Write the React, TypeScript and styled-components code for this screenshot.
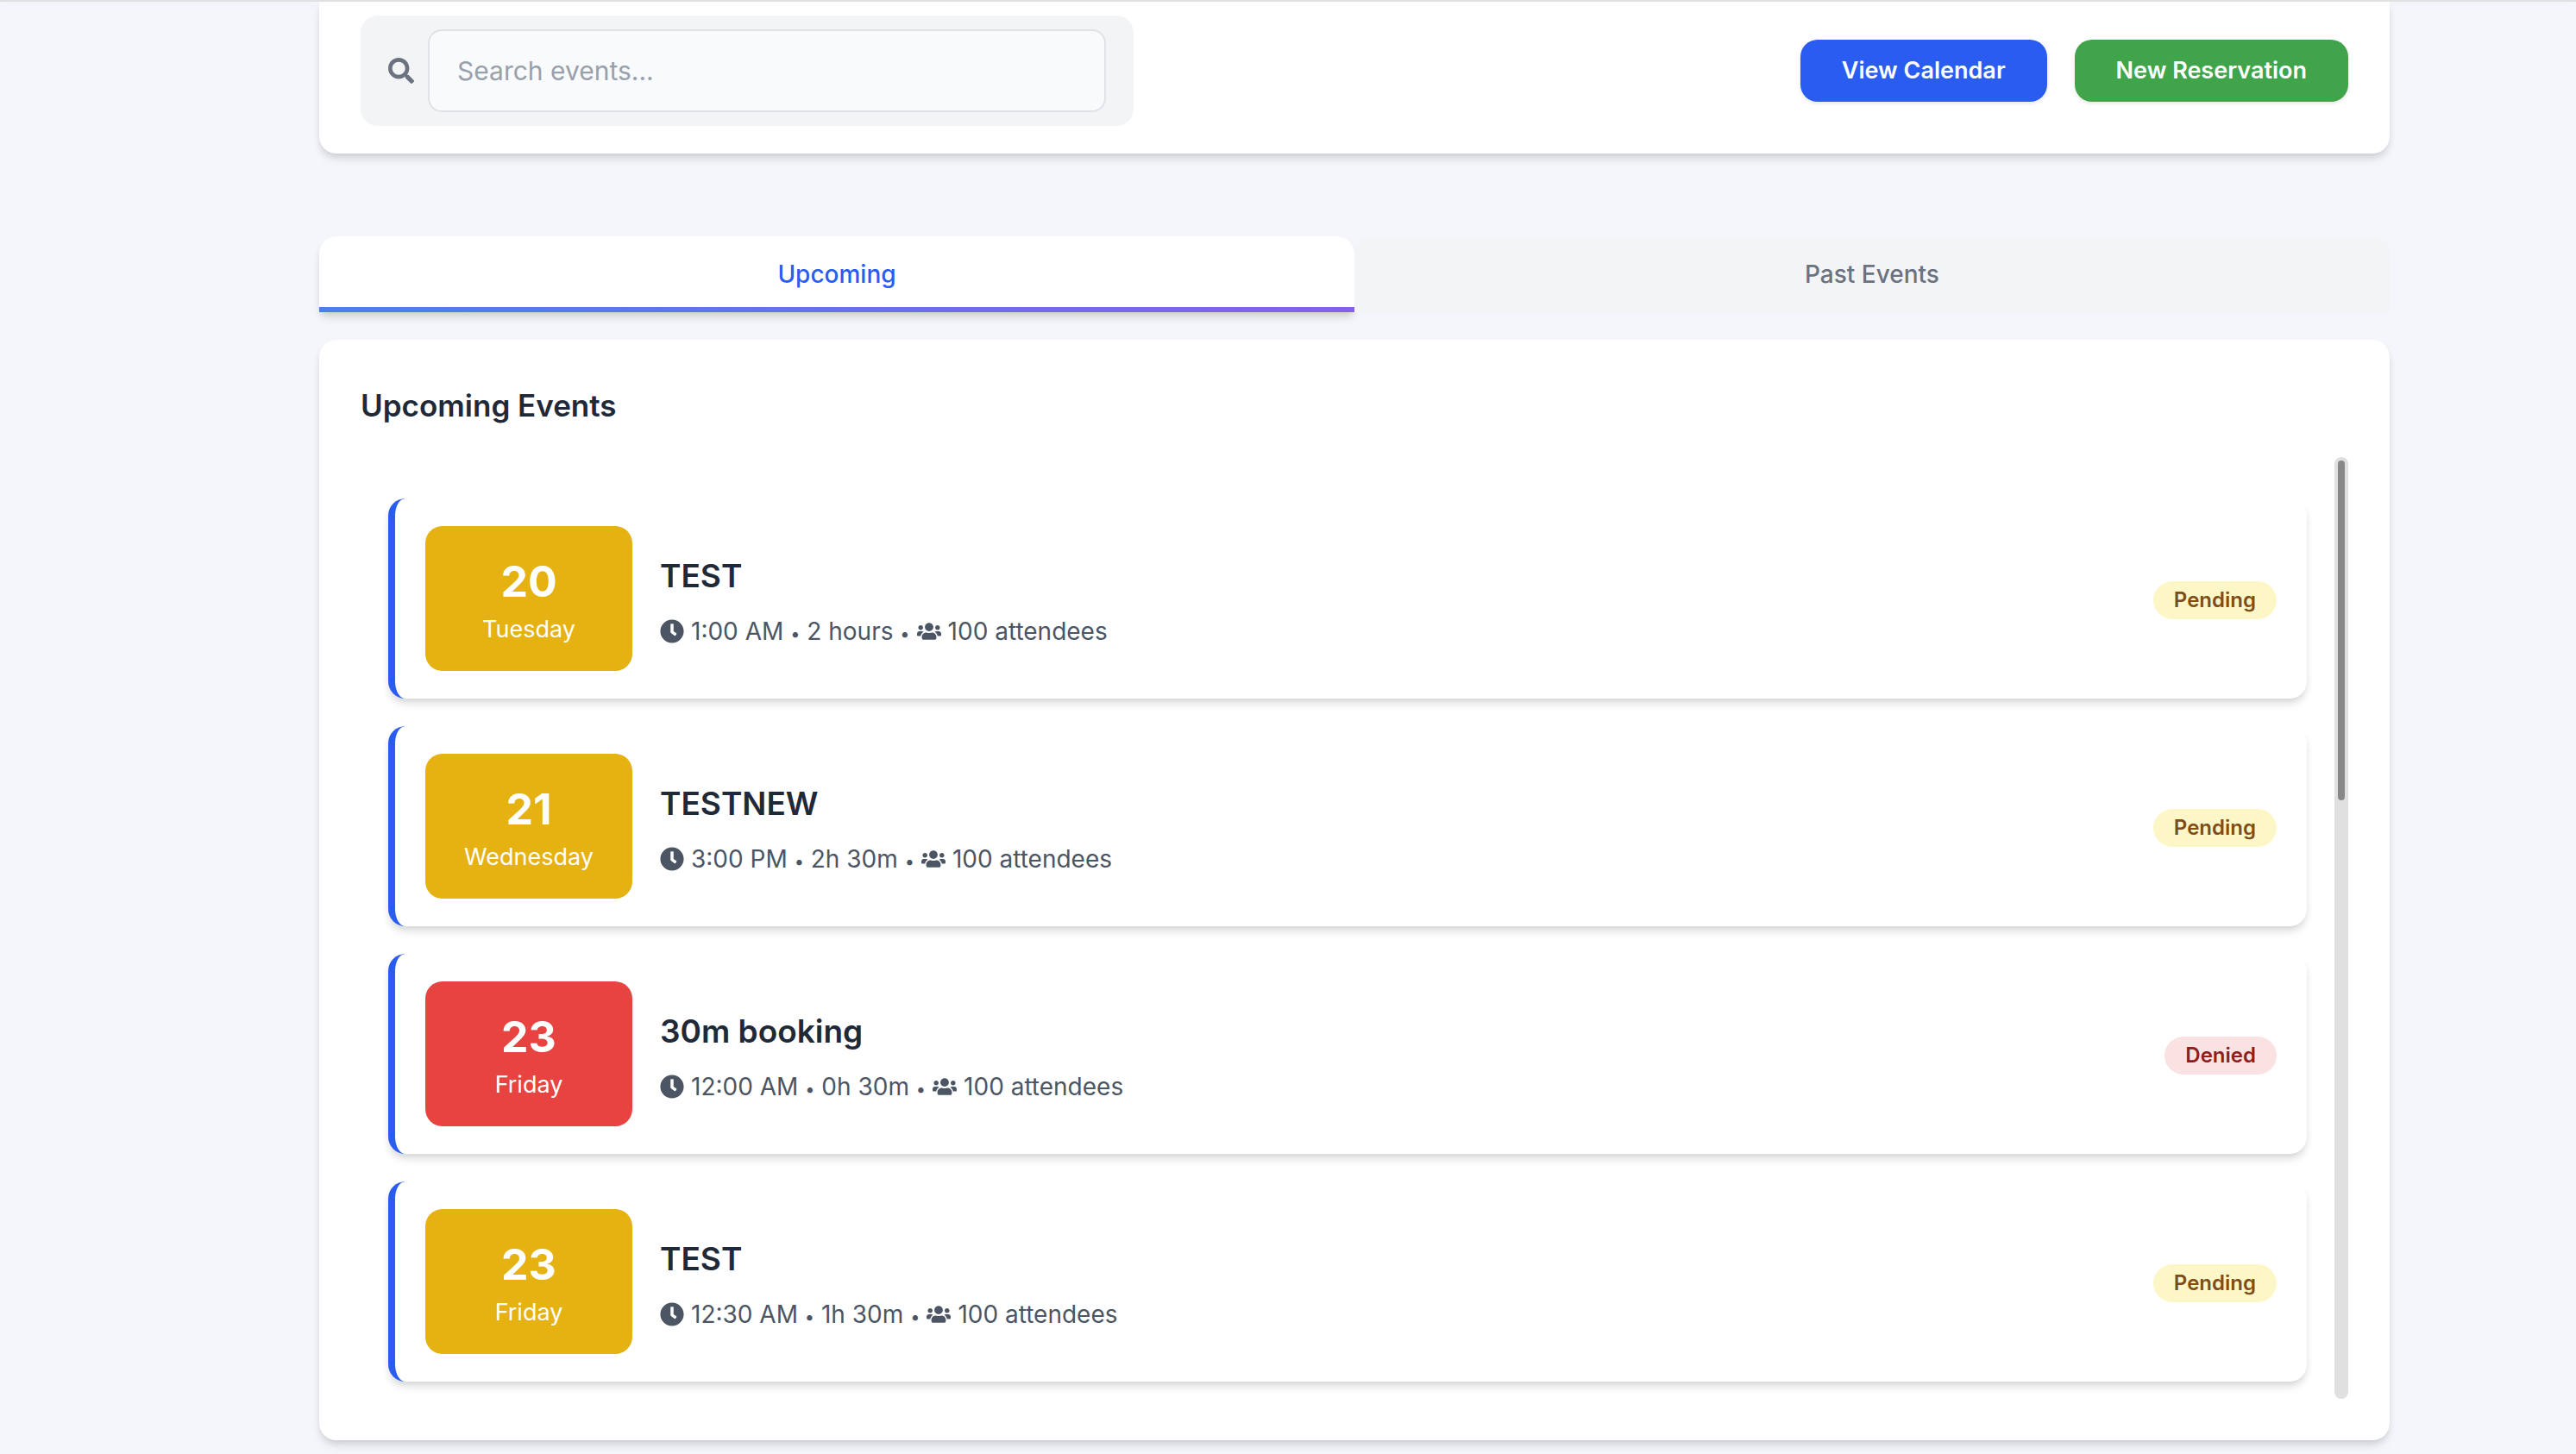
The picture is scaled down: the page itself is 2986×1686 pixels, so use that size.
import React from "react";
import styled, { createGlobalStyle } from "styled-components";
import { FaSearch, FaClock, FaUsers } from "react-icons/fa";

const GlobalStyle = createGlobalStyle`
  *, *::before, *::after { box-sizing: border-box; }
  body {
    margin: 0;
    background: #f4f6fb;
    color: #1f2937;
    font-family: Inter, "Liberation Sans", sans-serif;
    font-size: 28px;
    line-height: 40px;
  }
  button, input { font: inherit; }
  h2, h3, p, ul { margin: 0; padding: 0; }
`;

const cardShadow = "0 8px 12px -2px rgba(0, 0, 0, 0.1), 0 4px 8px -2px rgba(0, 0, 0, 0.1)";

const NavEdge = styled.header`
  position: relative;
  height: 2px;
  background: #e0e0e0;
  box-shadow: 0 2px 10px rgba(0, 0, 0, 0.06);
`;

const Page = styled.main`
  padding: 0 0 16px 154px;
`;

const Container = styled.div`
  max-width: 2400px;
  margin: 0 auto;
`;

const Toolbar = styled.section`
  display: flex;
  align-items: center;
  justify-content: space-between;
  padding: 16px 48px 32px;
  background: #fff;
  border-radius: 0 0 20px 20px;
  box-shadow: ${cardShadow};
`;

const SearchBox = styled.label`
  display: flex;
  align-items: center;
  gap: 16px;
  flex: 0 1 896px;
  padding: 16px 32px;
  background: #f3f4f6;
  border-radius: 20px;
  color: #6b7280;
`;

const SearchInput = styled.input`
  flex: 1;
  min-width: 0;
  height: 96px;
  padding: 0 32px;
  border: 2px solid #dfe2e8;
  border-radius: 16px;
  background: #f9fafb;
  color: #1f2937;
  font-size: 30px;
  &::placeholder { color: #98a0ab; opacity: 1; }
`;

const Actions = styled.div`
  display: flex;
  gap: 32px;
`;

const ActionButton = styled.button<{ $color: string }>`
  padding: 16px 48px;
  border: 0;
  border-radius: 20px;
  background: ${(p) => p.$color};
  box-shadow: 0 2px 4px rgba(0, 0, 0, 0.1);
  color: #fff;
  font-weight: 600;
  font-size: 27px;
`;

const Tabs = styled.div`
  display: flex;
  margin: 96px 0 32px;
`;

const Tab = styled.button<{ $active?: boolean }>`
  flex: 1;
  height: 88px;
  padding: 0;
  border: 0;
  border-radius: 20px 20px 0 0;
  color: ${(p) => (p.$active ? "#2b5cf2" : "#6b7280")};
  background: ${(p) =>
    p.$active
      ? "linear-gradient(90deg, #4a80ec, #8560ea) bottom / 100% 6px no-repeat, #fff"
      : "#f3f4f6"};
  box-shadow: ${(p) => (p.$active ? cardShadow : "none")};
  font-weight: 500;
`;

const Panel = styled.section`
  padding: 48px;
  background: #fff;
  border-radius: 20px;
  box-shadow: ${cardShadow};
`;

const PanelTitle = styled.h2`
  margin-bottom: 32px;
  font-size: 35px;
  line-height: 56px;
  font-weight: 600;
`;

const ScrollArea = styled.div`
  display: flex;
`;

const EventList = styled.ul`
  flex: 1;
  display: flex;
  flex-direction: column;
  gap: 32px;
  padding: 48px 32px 20px;
  list-style: none;
`;

const ScrollTrack = styled.div`
  width: 16px;
  padding: 4px;
  border-radius: 8px;
  background: #e0e0e0;
`;

const ScrollThumb = styled.div`
  height: 394px;
  border-radius: 4px;
  background: #888;
`;

const EventCard = styled.li`
  display: flex;
  align-items: center;
  gap: 32px;
  padding: 32px 35px;
  border-left: 8px solid #2b5cf2;
  border-radius: 20px;
  background: #fff;
  box-shadow: ${cardShadow};
`;

const DateBox = styled.div<{ $color: string }>`
  display: flex;
  flex-direction: column;
  align-items: center;
  gap: 4px;
  width: 240px;
  padding: 32px 0 28px;
  border-radius: 20px;
  background: ${(p) => p.$color};
  color: #fff;
`;

const DayNumber = styled.span`
  font-size: 50px;
  line-height: 64px;
  font-weight: 700;
`;

const DayName = styled.span`
  font-size: 27px;
`;

const CardBody = styled.div`
  flex: 1;
  display: flex;
  align-items: center;
  justify-content: space-between;
  padding-top: 4px;
`;

const EventTitle = styled.h3`
  margin-bottom: 16px;
  font-size: 37px;
  line-height: 56px;
  font-weight: 600;
`;

const Meta = styled.p`
  display: flex;
  align-items: center;
  gap: 8px;
  color: #4b5563;
`;

const Dot = styled.span`
  font-size: 20px;
  line-height: 20px;
`;

const Badge = styled.span<{ $denied?: boolean }>`
  padding: 2px 24px;
  border-radius: 22px;
  background: ${(p) => (p.$denied ? "#fbe2e2" : "#fdf7c8")};
  color: ${(p) => (p.$denied ? "#8f1d1d" : "#804d14")};
  font-size: 24px;
  font-weight: 600;
`;

const events = [
  { day: 20, name: "Tuesday", title: "TEST", time: "1:00 AM", length: "2 hours" },
  { day: 21, name: "Wednesday", title: "TESTNEW", time: "3:00 PM", length: "2h 30m" },
  { day: 23, name: "Friday", title: "30m booking", time: "12:00 AM", length: "0h 30m", denied: true },
  { day: 23, name: "Friday", title: "TEST", time: "12:30 AM", length: "1h 30m" },
];

export default function App() {
  return (
    <>
      <GlobalStyle />
      <NavEdge />
      <Page>
        <Container>
          <Toolbar>
            <SearchBox>
              <FaSearch size={30} />
              <SearchInput type="search" aria-label="Search events" placeholder="Search events..." />
            </SearchBox>
            <Actions>
              <ActionButton type="button" $color="#2b5cf2">View Calendar</ActionButton>
              <ActionButton type="button" $color="#40a44b">New Reservation</ActionButton>
            </Actions>
          </Toolbar>
          <Tabs role="tablist">
            <Tab type="button" role="tab" aria-selected="true" $active>Upcoming</Tab>
            <Tab type="button" role="tab" aria-selected="false">Past Events</Tab>
          </Tabs>
          <Panel>
            <PanelTitle>Upcoming Events</PanelTitle>
            <ScrollArea>
              <EventList>
                {events.map((e, i) => (
                  <EventCard key={i}>
                    <DateBox $color={e.denied ? "#e74340" : "#e5b212"}>
                      <DayNumber>{e.day}</DayNumber>
                      <DayName>{e.name}</DayName>
                    </DateBox>
                    <CardBody>
                      <div>
                        <EventTitle>{e.title}</EventTitle>
                        <Meta>
                          <FaClock size={28} />
                          <span>
                            {e.time} <Dot>•</Dot> {e.length} <Dot>•</Dot>
                          </span>
                          <FaUsers size={28} />
                          <span>100 attendees</span>
                        </Meta>
                      </div>
                      <Badge $denied={e.denied}>{e.denied ? "Denied" : "Pending"}</Badge>
                    </CardBody>
                  </EventCard>
                ))}
              </EventList>
              <ScrollTrack>
                <ScrollThumb />
              </ScrollTrack>
            </ScrollArea>
          </Panel>
        </Container>
      </Page>
    </>
  );
}
